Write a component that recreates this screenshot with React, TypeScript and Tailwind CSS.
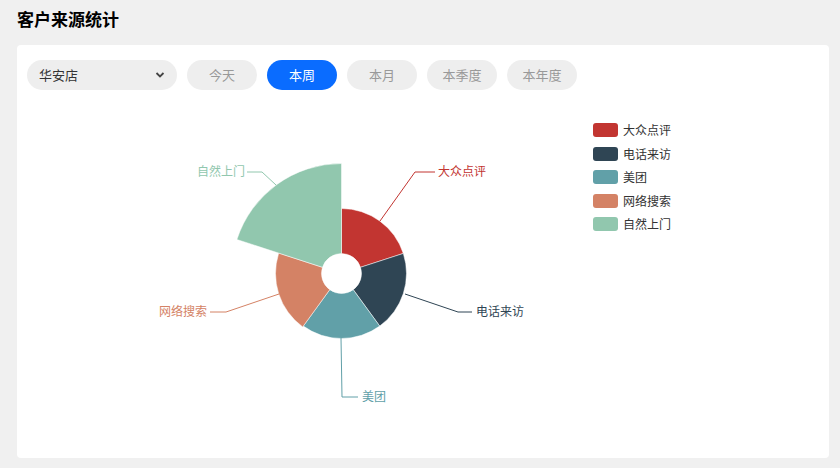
import React from "react";

const cx = 341.5, cy = 273.5, r0 = 20;
const data = [
  { name: "大众点评", color: "#c23531", r: 65 },
  { name: "电话来访", color: "#2f4554", r: 65 },
  { name: "美团", color: "#61a0a8", r: 65 },
  { name: "网络搜索", color: "#d48265", r: 66 },
  { name: "自然上门", color: "#91c7ae", r: 110 },
];
function pt(a: number, r: number) {
  const rad = ((a - 90) * Math.PI) / 180;
  return [cx + r * Math.cos(rad), cy + r * Math.sin(rad)];
}
function sector(a0: number, a1: number, r: number) {
  const [x0, y0] = pt(a0, r), [x1, y1] = pt(a1, r), [x2, y2] = pt(a1, r0), [x3, y3] = pt(a0, r0);
  return `M${x0} ${y0} A${r} ${r} 0 0 1 ${x1} ${y1} L${x2} ${y2} A${r0} ${r0} 0 0 0 ${x3} ${y3} Z`;
}

export default function App() {
  const btns = ["今天", "本周", "本月", "本季度", "本年度"];
  const font = { fontFamily: '"Noto Sans CJK SC", sans-serif' };
  const labels = [
    { line: "M380 221 L415 172 L435 172", x: 438, y: 172, anchor: "start" },
    { line: "M405 294 L458 312 L472 312", x: 476, y: 312, anchor: "start" },
    { line: "M341 338 L342 397 L358 397", x: 362, y: 397, anchor: "start" },
    { line: "M279 294 L226 312 L210 312", x: 207, y: 312, anchor: "end" },
    { line: "M276 185 L262 172 L247 172", x: 245, y: 172, anchor: "end" },
  ];
  return (
    <div className="w-[840px] h-[468px] bg-[#f0f0f0] px-[17px] pt-[8px]" style={font}>
      <div className="text-[17px] font-bold text-black h-[37px] leading-[22px]">客户来源统计</div>
      <div className="relative bg-white rounded-[4px] w-[812px] h-[413px]">
        <div className="flex items-center gap-[10px] pl-[10px] pt-[15px]">
          <div className="w-[150px] h-[30px] rounded-full bg-[#eeeeee] flex items-center justify-between px-[12px] text-[13px] text-[#333]">
            <span>华安店</span>
            <svg width="10" height="8" viewBox="0 0 10 8"><path d="M1.5 2 L5 5.5 L8.5 2" stroke="#444" strokeWidth="1.8" fill="none" /></svg>
          </div>
          {btns.map((b) => (
            <div key={b} className={`w-[70px] h-[30px] rounded-full flex items-center justify-center text-[13px] ${b === "本周" ? "bg-[#0a6cff] text-white" : "bg-[#eeeeee] text-[#999]"}`}>{b}</div>
          ))}
        </div>
        <div className="absolute left-[576px] top-[78px] flex flex-col gap-[9.6px]">
          {data.map((d) => (
            <div key={d.name} className="flex items-center gap-[5px] h-[14px] text-[12px] text-[#333]">
              <div className="w-[25px] h-[14px] rounded-[3px]" style={{ background: d.color }} />
              <span>{d.name}</span>
            </div>
          ))}
        </div>
      </div>
      <svg className="absolute left-0 top-0" width="840" height="468" style={{ pointerEvents: "none" }}>
        {data.map((d, i) => (
          <path key={d.name} d={sector(i * 72, (i + 1) * 72, d.r)} fill={d.color} stroke="#fff" strokeWidth="0.5" />
        ))}
        {labels.map((l, i) => (
          <g key={i}>
            <path d={l.line} stroke={data[i].color} fill="none" strokeWidth="1" />
            <text x={l.x} y={l.y + 4} fontSize="12" fill={data[i].color} textAnchor={l.anchor as any} style={font}>{data[i].name}</text>
          </g>
        ))}
      </svg>
    </div>
  );
}
